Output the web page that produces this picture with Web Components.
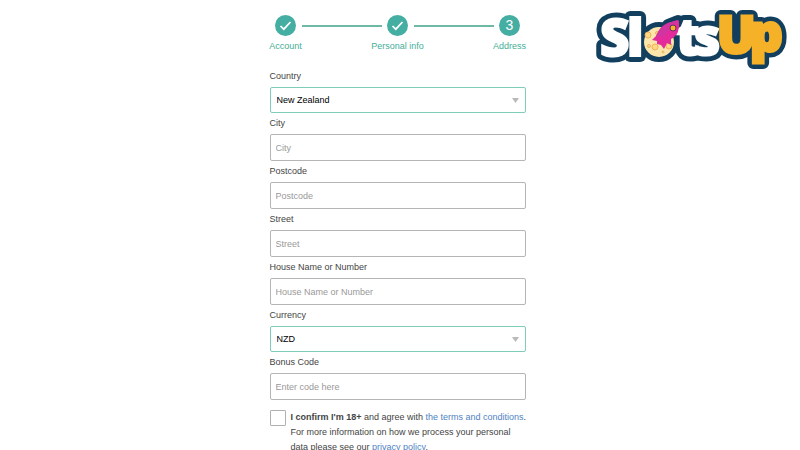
<!DOCTYPE html>
<html lang="en">
<head>
<meta charset="utf-8">
<meta name="viewport" content="width=device-width, initial-scale=1">
<title>Sign up - Address</title>
<style>
  html { overflow: hidden; }
  body {
    margin: 0;
    background: #fff;
    color: #444;
    font: 9px/15px "Liberation Sans", Arial, sans-serif;
  }
</style>
</head>
<body>

<signup-page>
  <step-bar slot="steps">
    <step-item done>Account</step-item>
    <step-line></step-line>
    <step-item done>Personal info</step-item>
    <step-line></step-line>
    <step-item number="3">Address</step-item>
  </step-bar>

  <select-field label="Country" options="New Zealand"></select-field>
  <text-field label="City" placeholder="City"></text-field>
  <text-field label="Postcode" placeholder="Postcode"></text-field>
  <text-field label="Street" placeholder="Street"></text-field>
  <text-field label="House Name or Number" placeholder="House Name or Number"></text-field>
  <select-field label="Currency" options="NZD"></select-field>
  <text-field label="Bonus Code" placeholder="Enter code here"></text-field>
  <terms-check></terms-check>

  <brand-logo slot="logo"></brand-logo>
</signup-page>

<script>
/* Page frame: form in the middle column, logo in the right one */
class SignupPage extends HTMLElement {
  constructor() {
    super();
    this.attachShadow({ mode: 'open' }).innerHTML = `
      <style>
        :host {
          display: grid;
          grid-template-columns: 1fr minmax(0, 256px) 1fr;
          align-items: start;
          padding-right: 5px;
        }
        main { grid-column: 2; padding-top: 15px; }
        form { margin-top: 12px; }
        aside { justify-self: end; padding: 8px 3px 0 0; }
      </style>
      <main>
        <slot name="steps"></slot>
        <form><slot></slot></form>
      </main>
      <aside><slot name="logo"></slot></aside>
    `;
  }
}

/* Progress bar */
class StepBar extends HTMLElement {
  constructor() {
    super();
    this.attachShadow({ mode: 'open' }).innerHTML = `
      <style>
        :host { display: flex; align-items: flex-start; color: #45ae97; }
      </style>
      <slot></slot>
    `;
  }
}

class StepItem extends HTMLElement {
  constructor() {
    super();
    this.attachShadow({ mode: 'open' });
  }

  connectedCallback() {
    const mark = this.hasAttribute('done')
      ? '<svg width="13" height="13" viewBox="0 0 13 13"><path d="M1.5 7 L4.8 10.2 L11.5 3" fill="none" stroke="#fff" stroke-width="1.7"/></svg>'
      : this.getAttribute('number');

    this.shadowRoot.innerHTML = `
      <style>
        :host {
          display: flex;
          flex-direction: column;
          align-items: center;
          width: 32px;
          white-space: nowrap;
        }
        .dot {
          display: flex;
          align-items: center;
          justify-content: center;
          width: 21px;
          height: 21px;
          border-radius: 50%;
          background: #45aea3;
          color: #fff;
          font-size: 14px;
        }
        .name { margin-top: 3px; }
      </style>
      <span class="dot">${mark}</span>
      <span class="name"><slot></slot></span>
    `;
  }
}

class StepLine extends HTMLElement {
  constructor() {
    super();
    this.attachShadow({ mode: 'open' }).innerHTML = `
      <style>
        :host { flex: 1; height: 2px; margin-top: 10px; background: #6db9a6; }
      </style>
    `;
  }
}

/* Rules shared by both kinds of field */
const fieldCss = `
  :host { display: block; }
  label { display: block; line-height: 21px; }
  input, select {
    display: block;
    box-sizing: border-box;
    width: 100%;
    margin: 0;
    border: 1px solid #b5b5b5;
    border-radius: 2px;
    background: #fff;
    font: inherit;
  }
`;

class TextField extends HTMLElement {
  constructor() {
    super();
    this.attachShadow({ mode: 'open' });
  }

  connectedCallback() {
    this.shadowRoot.innerHTML = `
      <style>
        ${fieldCss}
        input { height: 27px; padding: 0 5px; color: #111; }
        input::placeholder { color: #999; opacity: 1; }
      </style>
      <label for="field">${this.getAttribute('label')}</label>
      <input id="field" type="text" placeholder="${this.getAttribute('placeholder')}">
    `;
  }
}

class SelectField extends HTMLElement {
  constructor() {
    super();
    this.attachShadow({ mode: 'open' });
  }

  connectedCallback() {
    const options = this.getAttribute('options').split(',')
      .map(o => `<option>${o}</option>`).join('');

    this.shadowRoot.innerHTML = `
      <style>
        ${fieldCss}
        .box { display: grid; align-items: center; }
        .box > * { grid-area: 1 / 1; }
        select {
          appearance: none;
          height: 26px;
          padding: 0 20px 0 6px;
          border-color: #7dcdb8;
          color: #000;
        }
        svg { justify-self: end; margin-right: 7px; pointer-events: none; }
      </style>
      <label for="field">${this.getAttribute('label')}</label>
      <div class="box">
        <select id="field">${options}</select>
        <svg width="7" height="5" viewBox="0 0 7 5"><path d="M0 0H7L3.5 5Z" fill="#b9b9b9"/></svg>
      </div>
    `;
  }
}

class TermsCheck extends HTMLElement {
  constructor() {
    super();
    this.attachShadow({ mode: 'open' }).innerHTML = `
      <style>
        :host {
          display: flex;
          align-items: flex-start;
          gap: 5px;
          margin-top: 10px;
        }
        input {
          appearance: none;
          box-sizing: border-box;
          flex: none;
          width: 16px;
          height: 16px;
          margin: 0;
          border: 1px solid #b0b0b0;
          border-radius: 1px;
          background: #fff;
        }
        input:checked { background: #45aea3; }
        label { white-space: nowrap; }
        a { color: #4f83c4; text-decoration: none; }
      </style>
      <input id="agree" type="checkbox">
      <label for="agree"><b>I confirm I'm 18+</b> and agree with
        <a href="#terms">the terms and conditions</a>.<br>
        For more information on how we process your personal<br>
        data please see our <a href="#privacy">privacy policy</a>.</label>
    `;
  }
}

/* Logo: outlined word with a moon and a rocket over its "o" */
class BrandLogo extends HTMLElement {
  constructor() {
    super();
    this.attachShadow({ mode: 'open' }).innerHTML = `
      <style>
        :host { display: block; }
        svg { display: block; }
        text { font-family: "Open Sans", sans-serif; font-weight: 800; font-size: 51px; }
        .back { fill: #123f5e; stroke: #123f5e; stroke-width: 12px; stroke-linejoin: round; }
        .white { fill: #fff; stroke: #fff; stroke-width: 2px; }
        .gold { fill: #f5b128; stroke: #f5b128; stroke-width: 3px; }
      </style>
      <svg width="196" height="64" viewBox="0 0 196 64" role="img" aria-label="SlotsUp">
        <g class="back" aria-hidden="true">
          <text x="4 31" y="48">Sl</text>
          <text x="80 98" y="47">ts</text>
          <text x="121 154" y="45 43">Up</text>
          <circle cx="63" cy="34" r="14"/>
          <path d="M66 28L72 17L82 13L84 22L75 33Z"/>
        </g>
        <text class="white" x="4 31" y="48">Sl</text>
        <text class="white" x="80 98" y="47">ts</text>
        <text class="gold" x="121 154" y="45 43">Up</text>
        <circle cx="63" cy="34" r="15" fill="#fce6ac"/>
        <g fill="#fbd987" stroke="#eeb35a" stroke-width="1">
          <circle cx="52" cy="27" r="3"/>
          <circle cx="61" cy="25" r="1.5"/>
          <circle cx="53" cy="38" r="1.5"/>
          <circle cx="59" cy="39" r="3"/>
          <circle cx="67" cy="44" r="1"/>
          <circle cx="73" cy="38" r="3"/>
        </g>
        <path d="M60 28Q64 18 72 15L82 12L83 14Q84 25 77 30L75 31L75 37L71 35L68 41L65 37L61 36L61 33L56 32Z" fill="#e52b9b"/>
        <path d="M60 28Q64 18 72 15L82 12L83 14Q74 18 69 28L62 29Z" fill="#d034a0"/>
        <circle cx="77" cy="20" r="3" fill="#f5b128" stroke="#5d345f" stroke-width="1"/>
      </svg>
    `;
  }
}

customElements.define('signup-page', SignupPage);
customElements.define('step-bar', StepBar);
customElements.define('step-item', StepItem);
customElements.define('step-line', StepLine);
customElements.define('text-field', TextField);
customElements.define('select-field', SelectField);
customElements.define('terms-check', TermsCheck);
customElements.define('brand-logo', BrandLogo);
</script>
</body>
</html>
